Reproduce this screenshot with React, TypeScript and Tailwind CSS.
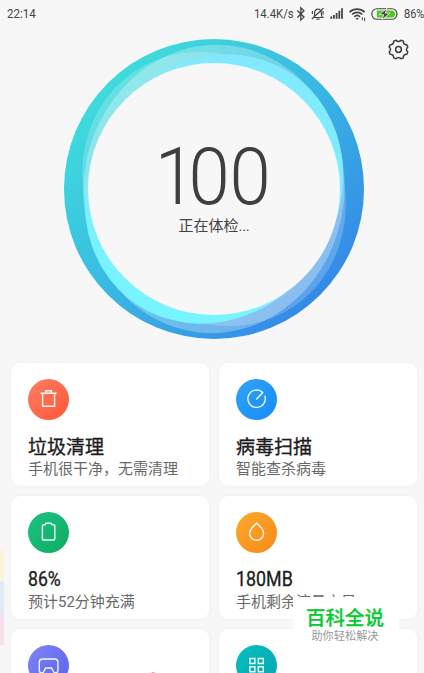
import type { ReactNode } from "react";

const CJK = "font-['Roboto','Noto_Sans_CJK_SC',sans-serif]";

function StatusBar() {
  return (
    <header className="flex h-[27px] items-center pl-[7px] text-[13px] leading-none text-[#444]">
      <span className="w-[247px]">
        <span className="inline-block origin-left scale-x-[0.89]">22:14</span>
      </span>
      <span className="w-[41px] whitespace-nowrap">
        <span className="inline-block origin-left scale-x-[0.87]">14.4K/s</span>
      </span>
      <StatusIcons />
      <span className="w-5 whitespace-nowrap">
        <span className="inline-block origin-left scale-x-[0.84]">86%</span>
      </span>
    </header>
  );
}

/** Bluetooth, muted bell, signal, wifi and charging battery. */
function StatusIcons() {
  return (
    <svg className="h-[18px] w-[109px] shrink-0" viewBox="295 4.5 109 18" fill="none" stroke="#444" strokeWidth="1.3">
      <path d="M297.3 10 304 16.6 300.8 19.6V7.2L304 10.3 297.3 17" />
      <path d="M313.8 17h8.8c-1.2-1-1.2-2-1.2-4 0-2.6-1.4-4.3-3.4-4.3s-3.4 1.7-3.4 4.3c0 2 0 3-.8 4zM316.5 18.7h3M311.8 18.5l11.6-10.8M323 10.5v3.5M312.4 10.5v3" strokeWidth="1.2" />
      <g fill="#444" stroke="none">
        <path d="M330.3 16h1.8v2.3h-1.8zM333 14.4h1.8v3.9H333zM335.7 12.5h1.8v5.8h-1.8zM338.4 10.3h1.8v8h-1.8zM341.1 7.8h1.8v10.5h-1.8z" />
      </g>
      <g strokeWidth="1.7">
        <path d="M349.6 11.6c4-4.1 11-4.1 15 0M352 14c3-2.8 7.3-2.8 10.3 0M354.3 16.3c1.7-1.6 4-1.6 5.7 0" />
      </g>
      <path d="M355.4 17.5h3.5l-1.7 1.9z" fill="#444" stroke="none" />
      <path d="M362.3 19.7v-3M364.6 20.7v-3.5" strokeWidth="1" />
      <rect x="371.8" y="8.2" width="25.2" height="10.6" rx="5.2" strokeWidth="1.1" />
      <path d="M376.8 10h14.7c4.7 0 4.7 7 0 7h-14.7z" fill="#53c91b" stroke="none" />
      <path d="m387 7.9-7.9 6.3h4.6l-1.7 4.9 7.9-6.4h-4.6z" fill="#444" stroke="#f7f7f7" strokeWidth=".8" />
    </svg>
  );
}

function GearIcon() {
  return (
    <svg className="h-[23px] w-[23px]" viewBox="-11.5 -11.5 23 23" fill="none" stroke="#3c3c3c" strokeWidth="1.5" strokeLinejoin="round">
      <path d="M-2.5-9.3Q0-6.6 2.5-9.3L4.8-8.4Q4.7-4.7 8.4-4.8L9.3-2.5Q6.6 0 9.3 2.5L8.4 4.8Q4.7 4.7 4.8 8.4L2.5 9.3Q0 6.6-2.5 9.3L-4.8 8.4Q-4.7 4.7-8.4 4.8L-9.3 2.5Q-6.6 0-9.3-2.5L-8.4-4.8Q-4.7-4.7-4.8-8.4Z" />
      <circle r="2.9" />
    </svg>
  );
}

function ScoreRing() {
  return (
    <section className="grid h-[300px] w-[300px] place-items-center">
      <svg className="col-start-1 row-start-1 h-[300px] w-[300px]" viewBox="-150 -150 300 300">
        <defs>
          <linearGradient id="ring" x1="0.15" y1="0.15" x2="0.85" y2="0.85">
            <stop offset="0" stopColor="#3fdbdc" />
            <stop offset="0.5" stopColor="#39b8e2" />
            <stop offset="1" stopColor="#358ae8" />
          </linearGradient>
          <linearGradient id="glow" x1="0" y1="0.8" x2="1" y2="0.2">
            <stop offset="0" stopColor="#76f6ff" />
            <stop offset="1" stopColor="#84e7ff" />
          </linearGradient>
        </defs>
        <circle r="150" fill="url(#ring)" />
        <ellipse rx="142" ry="126.5" transform="rotate(-125)" fill="#fff" opacity="0.2" />
        <ellipse rx="144.3" ry="130.5" transform="rotate(-84)" fill="#fff" opacity="0.28" />
        <ellipse rx="139" ry="124.5" transform="rotate(-56)" fill="url(#glow)" />
        <circle r="126" fill="#f7f7f7" />
      </svg>
      <div className="col-start-1 row-start-1 flex flex-col items-center">
        <strong className="mr-[3px] h-[72px] scale-x-[0.94] text-[79px] leading-[73px] font-light text-[#3f3f3f]">
          <span className="tracking-[-8px]">1</span>00
        </strong>
        <span className="mt-[2px] text-[15px] leading-[22px] text-[#444]">
          正在体检<span className="tracking-[-0.3px]">...</span>
        </span>
      </div>
    </section>
  );
}

type CardProps = {
  tint: string;
  icon: ReactNode;
  title?: ReactNode;
  note?: string;
};

function Card({ tint, icon, title, note }: CardProps) {
  return (
    <article className="h-[123px] rounded-[9px] bg-white px-[17px] pt-[15.5px] shadow-[0_0_5px_rgba(0,0,0,0.035)]">
      <div className={`flex h-[41px] w-[41px] items-center justify-center rounded-full ${tint}`}>
        <svg className="h-6 w-6" viewBox="-11.6 -12 24 24" fill="none" stroke="#fff" strokeWidth="1.4" strokeOpacity=".95">
          {icon}
        </svg>
      </div>
      <h2 className="mt-4 h-[22px] text-[19px] leading-6 whitespace-nowrap text-[#1c1c1c] [-webkit-text-stroke:0.35px]">{title}</h2>
      <p className="text-[15px] leading-[22px] whitespace-nowrap text-[#686868]">{note}</p>
    </article>
  );
}

const CARDS: CardProps[] = [
  {
    tint: "bg-linear-to-br from-[#ff7d62] to-[#ff5636]",
    icon: <path d="M-8-5.8H8M-6-5.8V7.2H6V-5.8M-2.8-5.8V-8.2H2.8V-5.8" />,
    title: "垃圾清理",
    note: "手机很干净，无需清理",
  },
  {
    tint: "bg-linear-to-br from-[#2fa3f7] to-[#168bf7]",
    icon: <path d="M-.4.4 6.2-6.4A8.7 8.7 0 1 0 8.2-3.2" />,
    title: "病毒扫描",
    note: "智能查杀病毒",
  },
  {
    tint: "bg-linear-to-br from-[#1cc283] to-[#0eac62]",
    icon: <path d="M-3.5-7.2-2.7-8.8H2.7L3.5-7.2H5Q6.2-7.2 6.2-6V6.8Q6.2 8 5 8H-5Q-6.2 8-6.2 6.8V-6Q-6.2-7.2-5-7.2Z" />,
    title: <span className="inline-block origin-left -translate-y-[2px] scale-x-[0.84] text-[21px]">86%</span>,
    note: "预计52分钟充满",
  },
  {
    tint: "bg-linear-to-br from-[#faa82c] to-[#f78a18]",
    icon: <path d="M0-8.8C3-6.2 7-2.8 7 1.2A7 7 0 0 1-7 1.2C-7-2.8-3-6.2 0-8.8Z" />,
    title: <span className="inline-block origin-left -translate-y-[2px] scale-x-[0.85] text-[21px]">180MB</span>,
    note: "手机剩余流量充足",
  },
  {
    tint: "bg-linear-to-br from-[#8084f8] to-[#5961ef]",
    icon: <path d="M-6-6H6Q9.3-6 9.3-2.8V5Q9.3 8 7 8 5.5 8 4.5 6L3 3H-3L-4.5 6Q-5.5 8-7 8-9.3 8-9.3 5V-2.8Q-9.3-6-6-6Z" />,
  },
  {
    tint: "bg-linear-to-br from-[#06bfc0] to-[#05a6b2]",
    icon: <path d="M-6.7-6.5h5v5h-5zM1.7-6.5h5v5h-5zM-6.7 1.7h5v5h-5zM1.7 1.7h5v5h-5z" />,
  },
];

export default function App() {
  return (
    <main className={`relative h-[673px] w-[424px] overflow-hidden bg-[#f7f7f7] ${CJK}`}>
      <StatusBar />
      <div className="flex h-[336px] pt-3 pl-16">
        <ScoreRing />
        <button className="-mt-[1px] ml-[22.5px] h-[23px] w-[23px]" aria-label="设置">
          <GearIcon />
        </button>
      </div>
      <div className="grid grid-cols-[198px_198px] gap-x-[10px] gap-y-[10.2px] pl-[11px]">
        {CARDS.map((card, i) => (
          <Card key={i} {...card} />
        ))}
      </div>

      {/* Side handle peeking in from the left edge */}
      <div className="absolute top-[550px] left-0 w-1">
        <div className="h-[31px] bg-[#faf4da]" />
        <div className="h-8 bg-[#dfecf7]" />
        <div className="h-8 bg-[#f6e1eb]" />
      </div>
      <div className="absolute top-[672px] left-[151px] h-1 w-1 rounded-full bg-[#ff8f9c]" />

      <aside className="absolute top-[597px] left-[293px] flex h-[50px] w-[106px] flex-col items-center bg-white pt-[10px] pr-[2px]">
        <strong className="h-[23px] text-[19.5px] leading-6 font-medium text-[#05cb31] [-webkit-text-stroke:0.25px]">百科全说</strong>
        <span className="text-[11.2px] leading-[13px] text-[#999]">助你轻松解决</span>
      </aside>
    </main>
  );
}
